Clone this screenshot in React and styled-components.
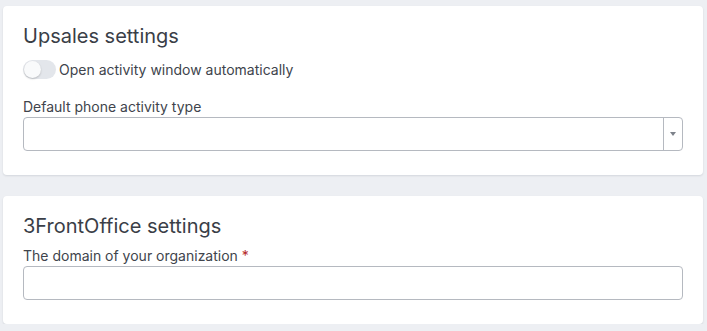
import styled, { createGlobalStyle } from "styled-components";

const GlobalStyle = createGlobalStyle`
  body {
    margin: 0;
    background: #edeff3;
    font-family: Inter, "Noto Sans", sans-serif;
    color: #3b3f47;
  }
`;

const Page = styled.div`
  display: flex;
  flex-direction: column;
  gap: 21px;
  padding: 6px 4px 0 3px;
`;

const Card = styled.section`
  background: #fff;
  border-radius: 4px;
  box-shadow: 0 1px 2px rgba(30, 40, 60, 0.12);
  padding: 18px 20px 24px;
`;

const Title = styled.h2`
  margin: 0;
  font-size: 20px;
  line-height: 24px;
  font-weight: 400;
  color: #3a3e47;
`;

const ToggleRow = styled.label`
  display: flex;
  align-items: center;
  gap: 3px;
  margin-top: 12px;
  font-size: 14px;
  line-height: 19px;
  color: #40444c;
`;

const Track = styled.span`
  position: relative;
  width: 33px;
  height: 19px;
  border-radius: 10px;
  background: #e3e6eb;
  flex: none;
`;

const Knob = styled.span`
  position: absolute;
  left: 1px;
  top: 1px;
  width: 17px;
  height: 17px;
  border-radius: 50%;
  background: #f9fafb;
  box-shadow: 0 1px 2px rgba(0, 0, 0, 0.2);
`;

const Field = styled.div`
  display: flex;
  flex-direction: column;
  gap: 2px;
  margin-top: ${(p) => p.$top || 0}px;
`;

const Label = styled.div`
  font-size: 14px;
  line-height: 17px;
  color: #40444c;
`;

const Required = styled.span`
  color: #b52b2b;
`;

const Box = styled.div`
  display: flex;
  height: 34px;
  box-sizing: border-box;
  border: 1px solid #b5b9c0;
  border-radius: 4px;
  background: #fff;
`;

const BoxInput = styled.div`
  flex: 1;
`;

const Caret = styled.div`
  width: 18px;
  border-left: 1px solid #b5b9c0;
  display: flex;
  align-items: center;
  justify-content: center;
  &::after {
    content: "";
    border-left: 3px solid transparent;
    border-right: 3px solid transparent;
    border-top: 4px solid #7d828a;
  }
`;

export default function App() {
  return (
    <>
      <GlobalStyle />
      <Page>
        <Card>
          <Title>Upsales settings</Title>
          <ToggleRow>
            <Track>
              <Knob />
            </Track>
            Open activity window automatically
          </ToggleRow>
          <Field $top={19}>
            <Label>Default phone activity type</Label>
            <Box>
              <BoxInput />
              <Caret />
            </Box>
          </Field>
        </Card>
        <Card>
          <Title>3FrontOffice settings</Title>
          <Field $top={9}>
            <Label>
              The domain of your organization <Required>*</Required>
            </Label>
            <Box>
              <BoxInput />
            </Box>
          </Field>
        </Card>
      </Page>
    </>
  );
}
